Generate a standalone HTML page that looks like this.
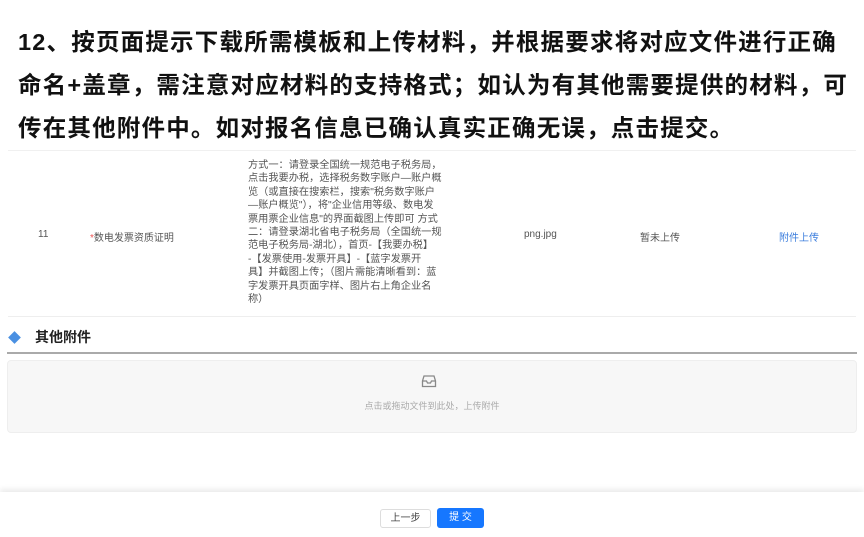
<!DOCTYPE html>
<html><head><meta charset="utf-8"><style>
*{margin:0;padding:0;box-sizing:border-box}
body{width:864px;height:537px;background:#fff;font-family:"Liberation Sans","Noto Sans CJK SC",sans-serif;position:relative;overflow:hidden;color:#333}
.title{position:absolute;left:18px;top:21px;width:860px;font-size:23.5px;font-weight:bold;line-height:43px;color:#111;letter-spacing:1.2px;white-space:nowrap}
.row{position:absolute;left:8px;right:8px;top:150px;height:167px;border-top:1px solid #f0f0f0;border-bottom:1px solid #eee}
.c{position:absolute;font-size:10px;color:#555;top:78px}
.desc{position:absolute;left:240px;top:8px;width:210px;font-size:10.2px;line-height:13.4px;color:#555;white-space:nowrap}
.sec{position:absolute;top:327px;font-size:14px;font-weight:bold;color:#222}
.dia{position:absolute;left:10px;top:333px;width:9px;height:9px;background:#4a90e2;transform:rotate(45deg)}
.line{position:absolute;left:7px;right:7px;top:352px;height:2px;background:#aaa}
.box{position:absolute;left:7px;right:7px;top:360px;height:73px;background:#f7f7f7;border:1px solid #eee;border-radius:4px}
.box p{position:absolute;top:38px;width:100%;text-align:center;font-size:9px;color:#aaa}
.foot{position:absolute;left:0;right:0;top:492px;height:45px;background:#fff;box-shadow:0 -3px 5px rgba(0,0,0,0.08)}
.b1{position:absolute;left:380px;top:509px;width:51px;height:19px;border:1px solid #ddd;border-radius:3px;font-size:10px;text-align:center;line-height:17px;color:#444;background:#fff}
.b2{position:absolute;left:437px;top:508px;width:47px;height:20px;background:#1677ff;border-radius:3px;font-size:10px;text-align:center;line-height:20px;color:#fff}
</style></head><body>
<div class="title">12、按页面提示下载所需模板和上传材料，并根据要求将对应文件进行正确<br>命名+盖章，需注意对应材料的支持格式；如认为有其他需要提供的材料，可<br>传在其他附件中。如对报名信息已确认真实正确无误，点击提交。</div>
<div class="row">
<div class="c" style="left:30px">11</div>
<div class="c" style="left:82px"><span style="color:#e55">*</span>数电发票资质证明</div>
<div class="desc">方式一：请登录全国统一规范电子税务局，<br>点击我要办税，选择税务数字账户—账户概<br>览（或直接在搜索栏，搜索"税务数字账户<br>—账户概览"），将"企业信用等级、数电发<br>票用票企业信息"的界面截图上传即可 方式<br>二：请登录湖北省电子税务局（全国统一规<br>范电子税务局-湖北），首页-【我要办税】<br>-【发票使用-发票开具】-【蓝字发票开<br>具】并截图上传；（图片需能清晰看到：蓝<br>字发票开具页面字样、图片右上角企业名<br>称）</div>
<div class="c" style="left:516px">png.jpg</div>
<div class="c" style="left:632px">暂未上传</div>
<div class="c" style="left:771px;color:#3b7ddd">附件上传</div>
</div>
<div class="dia"></div>
<div class="sec" style="left:35px">其他附件</div>
<div class="line"></div>
<div class="box">
<svg style="position:absolute;left:413px;top:12px" width="16" height="16" viewBox="0 0 16 16" fill="none" stroke="#888" stroke-width="1.3"><path d="M3 3h10l1.5 5v5.5h-13V8z"/><path d="M1.5 8h4l1 2h3l1-2h4"/></svg>
<p>点击或拖动文件到此处，上传附件</p>
</div>
<div class="foot"></div>
<div class="b1">上一步</div>
<div class="b2">提 交</div>
</body></html>
